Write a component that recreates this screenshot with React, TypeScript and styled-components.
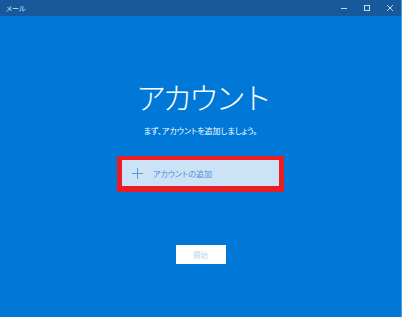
import React from "react";
import styled, { createGlobalStyle } from "styled-components";

const GlobalStyle = createGlobalStyle`
  html, body {
    margin: 0;
    padding: 0;
    background: #ffffff;
  }
  body {
    font-family: "Noto Sans CJK JP", "Noto Sans", sans-serif;
  }
`;

export default function App() {
  return (
    <>
      <GlobalStyle />
      <Window>
        <TitleBar>
          <AppName>メール</AppName>
          <Controls>
            <ControlButton aria-label="最小化">
              <svg width="10" height="10" viewBox="0 0 10 10">
                <line x1="2" y1="5.5" x2="8" y2="5.5" stroke="#c9d9ea" strokeWidth="1" />
              </svg>
            </ControlButton>
            <ControlButton aria-label="最大化">
              <svg width="10" height="10" viewBox="0 0 10 10">
                <rect x="2.5" y="2.5" width="5" height="5" fill="none" stroke="#c9d9ea" strokeWidth="1" />
              </svg>
            </ControlButton>
            <ControlButton aria-label="閉じる">
              <svg width="10" height="10" viewBox="0 0 10 10">
                <path d="M2 2 L8 8 M8 2 L2 8" stroke="#c9d9ea" strokeWidth="1" />
              </svg>
            </ControlButton>
          </Controls>
        </TitleBar>

        <Content>
          <Heading>アカウント</Heading>
          <Lead>まず、アカウントを追加しましょう。</Lead>

          <Highlight>
            <AddAccount>
              <svg width="11" height="11" viewBox="0 0 11 11">
                <path d="M5.5 0 V11 M0 5.5 H11" stroke="#5b9bd8" strokeWidth="1" />
              </svg>
              <AddLabel>アカウントの追加</AddLabel>
            </AddAccount>
          </Highlight>

          <StartButton disabled>開始</StartButton>
        </Content>
      </Window>
    </>
  );
}

const Window = styled.div`
  width: 401px;
  height: 317px;
  background: #0078d7;
  border-right: 1px solid #4a9fe4;
  display: flex;
  flex-direction: column;
`;

const TitleBar = styled.div`
  height: 16px;
  background: #17599a;
  display: flex;
  align-items: center;
  justify-content: space-between;
  padding-left: 6px;
`;

const AppName = styled.span`
  font-size: 7px;
  color: #d6e3f1;
  font-feature-settings: "palt";
  line-height: 1;
`;

const Controls = styled.div`
  display: flex;
  height: 100%;
`;

const ControlButton = styled.div`
  width: 23px;
  height: 16px;
  display: flex;
  align-items: center;
  justify-content: center;
`;

const Content = styled.div`
  flex: 1;
  display: flex;
  flex-direction: column;
  align-items: center;
  padding-top: 62px;
`;

const Heading = styled.h1`
  margin: 0;
  padding-left: 3.5px;
  font-size: 30px;
  font-weight: 300;
  line-height: 36px;
  color: #ffffff;
  letter-spacing: -3.5px;
`;

const Lead = styled.p`
  margin: 11px 0 0;
  font-size: 8px;
  line-height: 12px;
  color: #ffffff;
  font-feature-settings: "palt";
`;

const Highlight = styled.div`
  margin-top: 19px;
  border: 5px solid #ec1c24;
  border-top-width: 4px;
  border-bottom-width: 6px;
`;

const AddAccount = styled.div`
  width: 157px;
  height: 26px;
  box-sizing: border-box;
  background: #cce3f7;
  display: flex;
  align-items: center;
  gap: 10px;
  padding-left: 10px;
`;

const AddLabel = styled.span`
  font-size: 8px;
  color: #4a8fd2;
  font-feature-settings: "palt";
`;

const StartButton = styled.button`
  margin-top: 53px;
  width: 50px;
  height: 19px;
  border: none;
  padding: 0;
  background: #ffffff;
  color: #bcd5ed;
  font-family: "Noto Sans CJK JP", sans-serif;
  font-size: 7.5px;
`;
